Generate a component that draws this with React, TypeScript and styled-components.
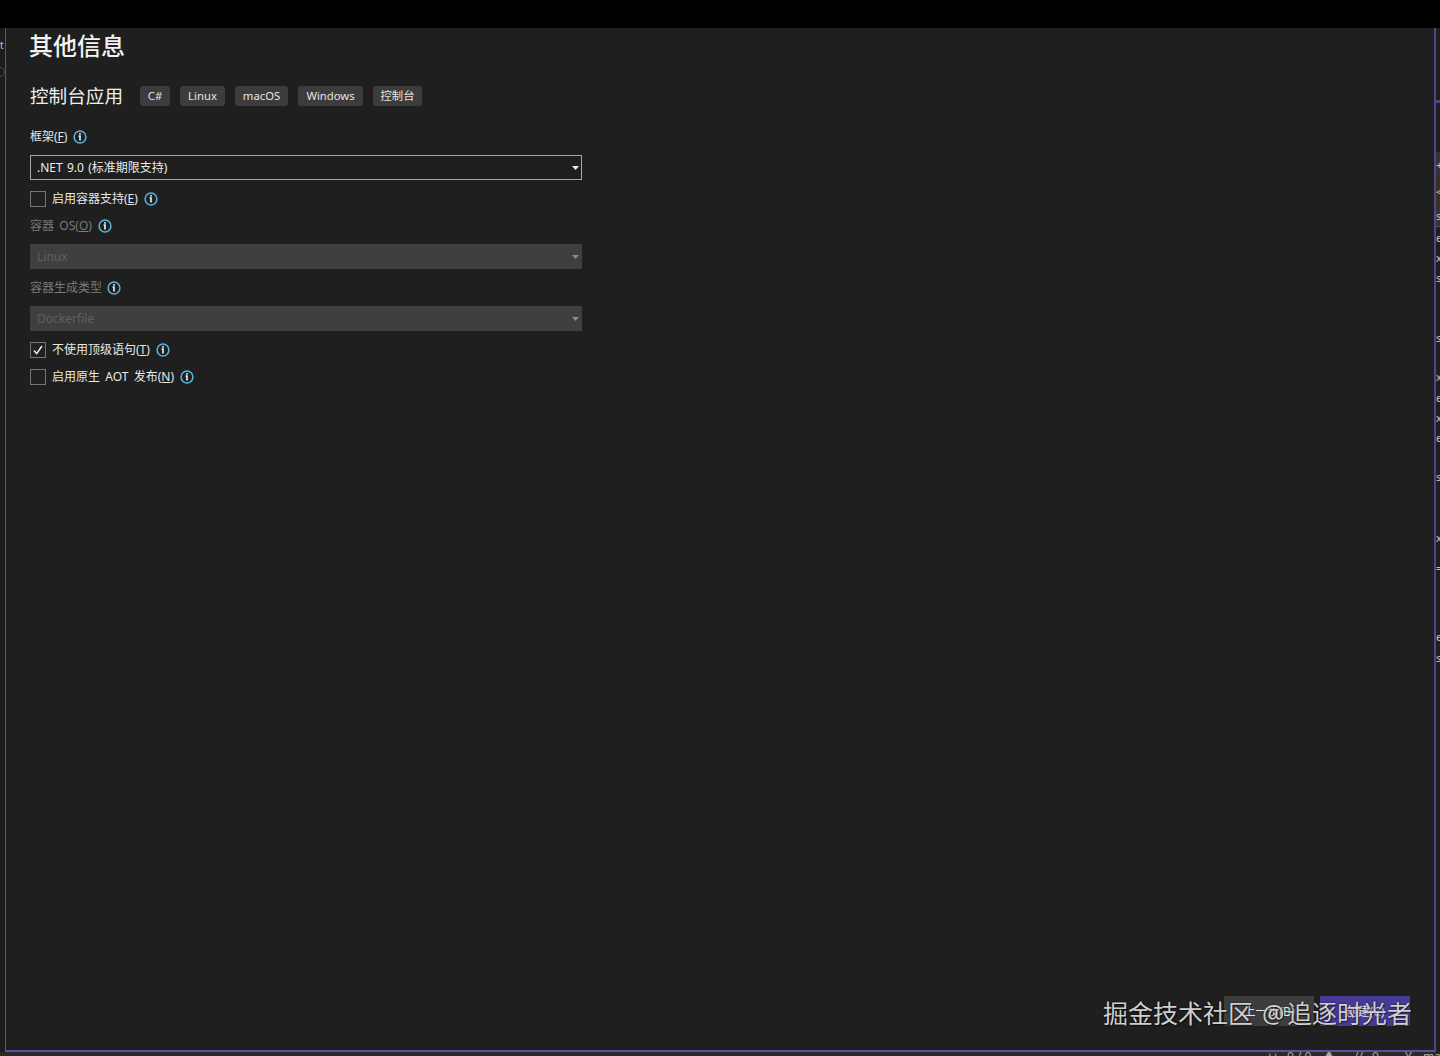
import React from "react";
import styled, { createGlobalStyle } from "styled-components";

const Global = createGlobalStyle`
  html, body { margin: 0; padding: 0; background: #1f1f1f; }
  body { font-family: "Noto Sans", "Noto Sans CJK SC", sans-serif; overflow: hidden; }
  #root { width: 1440px; height: 1056px; }
`;

const Shell = styled.div`
  width: 1440px; height: 1056px; display: flex; flex-direction: column; position: relative;
  overflow: hidden; background: #1f1f1f;
`;
const TopBar = styled.div`height: 28px; flex: none; background: #000;`;
const Middle = styled.div`flex: 1; display: flex; min-height: 0;`;
const LeftGutter = styled.div`
  width: 5px; flex: none; background: #1c1c1c; overflow: hidden; color: #c8c8c8;
  font-size: 10px; line-height: 12px; padding-top: 11px; box-sizing: border-box;
`;
const FaintRing = styled.div`
  width: 10px; height: 10px; margin: 16px 0 0 -5px; border-radius: 50%; border: 1px solid #4a4a4a; box-sizing: border-box;
`;
const Dialog = styled.main`
  flex: 1; display: flex; flex-direction: column; background: #1f1f1f; position: relative;
  border-left: 1px solid #5a4f9e; border-right: 2px solid #4d4689; border-bottom: 2px solid #5a50a0;
  padding-left: 24px; min-width: 0;
`;
const RightGutter = styled.div`
  width: 4px; flex: none; background: #1e1e1e; overflow: hidden; color: #c4c4c4;
  font-size: 11px; display: flex; flex-direction: column;
`;
const GutterRow = styled.div<{ $h: number; $bg?: string }>`
  height: ${p => p.$h}px; line-height: ${p => p.$h}px; flex: none;
  background: ${p => p.$bg || "transparent"};
`;
const BottomStrip = styled.div`
  height: 4px; flex: none; background: #2a2a2a; overflow: hidden; display: flex; align-items: flex-start;
  padding-left: 1268px; color: #a8a8a8; font-size: 12px; line-height: 10px; white-space: nowrap;
`;
const StatusItem = styled.span<{ $w: number }>`width: ${p => p.$w}px; flex: none;`;
const Title = styled.h1`
  margin: 0 0 14px -1px; height: 36px; font-size: 24px; line-height: 36px; font-weight: 500; color: #f2f2f2;
`;
const HeaderRow = styled.div`display: flex; align-items: center; height: 36px; margin-bottom: 9px;`;
const Subtitle = styled.h2`
  margin: 0; width: 110px; flex: none; font-size: 18.6px; line-height: 36px; font-weight: 400; color: #efefef; white-space: nowrap;
`;
const Tags = styled.div`display: flex; gap: 10px;`;
const Tag = styled.span<{ $w: number }>`
  width: ${p => p.$w}px; height: 20px; box-sizing: border-box; border-radius: 3px; background: #3c3c3c; text-align: center;
  color: #e4e4e4; font-size: 11.3px; line-height: 20px; white-space: nowrap;
`;
const Form = styled.div`display: flex; flex-direction: column; width: 552px; word-spacing: 2.2px;`;
const LabelRow = styled.div<{ $muted?: boolean }>`
  display: flex; align-items: center; gap: 6px; height: 27px; margin-bottom: 5px; font-size: 12px;
  color: ${p => p.$muted ? "#7a7a7a" : "#e6e6e6"}; white-space: nowrap;
`;
const LabelText = styled.span<{ $gap?: number }>`
  padding-bottom: 2px; margin-right: ${p => p.$gap ?? 0}px;
`;
const Key = styled.span`text-decoration: underline; text-underline-offset: 1px;`;
const Select = styled.div<{ $disabled?: boolean }>`
  height: 25px; box-sizing: border-box; display: flex; align-items: center; justify-content: space-between;
  padding: 0 6px; font-size: 12px; margin-bottom: 5px; word-spacing: 1.2px;
  border: 1px solid ${p => p.$disabled ? "#3f3f3f" : "#a8a8a8"};
  background: ${p => p.$disabled ? "#3f3f3f" : "#1f1f1f"};
  color: ${p => p.$disabled ? "#5f5f5f" : "#ececec"};
  svg { color: ${p => p.$disabled ? "#8a8a8a" : "#f0f0f0"}; margin-right: -4px; }
`;
const SelectText = styled.span<{ $raised?: boolean }>`padding-bottom: ${p => p.$raised ? 2 : 0}px;`;
const CheckRow = styled.div`
  display: flex; align-items: center; height: 27px; font-size: 12px; color: #e8e8e8; white-space: nowrap;
`;
const Box = styled.span`
  width: 16px; height: 16px; flex: none; box-sizing: border-box; border: 1px solid #757575; margin-right: 6px;
  display: flex; align-items: center; justify-content: center; background: #212121; color: #f2f2f2;
`;
const CheckText = styled.span`margin-right: 6px; padding-bottom: 2px;`;
const Actions = styled.div`
  position: absolute; right: 24px; bottom: 24px; display: flex; gap: 6px;
`;
const Action = styled.button<{ $primary?: boolean }>`
  width: 90px; height: 30px; border: 0; padding: 0; font: inherit; font-size: 12px; color: #e8e8e8;
  background: ${p => p.$primary ? "#463b96" : "#3d3d3d"};
`;
const Watermark = styled.div`
  position: absolute; right: 28px; top: 997px; font-size: 25px; line-height: 32px; color: #cfcfcf;
  text-shadow: 0 0 2px rgba(0,0,0,.7), 1px 1px 1px rgba(0,0,0,.5); white-space: nowrap;
`;
const AtMark = styled.span`margin: 0 2.5px;`;

const Info = () => (
  <svg width="14" height="14" viewBox="0 0 14 14" aria-hidden="true" style={{ flex: "none" }}>
    <circle cx="7" cy="7" r="5.9" fill="none" stroke="#58b4dc" strokeWidth="1.5" />
    <rect x="6.1" y="3.1" width="1.8" height="1.6" fill="#d6eef8" />
    <path d="M5.6 6.2H7V10.4" fill="none" stroke="#d6eef8" strokeWidth="1.7" />
  </svg>
);
const Caret = () => (
  <svg width="7" height="4" viewBox="0 0 7 4" aria-hidden="true"><path d="M0 0H7L3.5 4Z" fill="currentColor" /></svg>
);
const Check = () => (
  <svg width="12" height="12" viewBox="0 0 12 12" aria-hidden="true">
    <path d="M2 6.5L4.7 9.6L10 2" fill="none" stroke="currentColor" strokeWidth="1.5" />
  </svg>
);

const rows: { h: number; bg?: string; c?: string }[] = [
  { h: 72 }, { h: 3, bg: "#4d4689" }, { h: 49 },
  { h: 26, bg: "#333333", c: "+" }, { h: 27, bg: "#3a3020", c: "<" }, { h: 21, bg: "#333333", c: "s" }, { h: 1, bg: "#555555" }, { h: 1 },
  { h: 20, c: "e" }, { h: 20, c: "x" }, { h: 20, c: "s" }, { h: 40 }, { h: 20, c: "s" }, { h: 19 },
  { h: 20, c: "x" }, { h: 1 }, { h: 20, c: "e" }, { h: 20, c: "x" }, { h: 20, c: "e" }, { h: 19 },
  { h: 20, c: "s" }, { h: 41 }, { h: 20, c: "x" }, { h: 10 }, { h: 20, c: "=" }, { h: 49 }, { h: 20, c: "e" }, { h: 1 }, { h: 20, c: "s" },
];

export default function App() {
  return (
    <Shell>
      <Global />
      <TopBar />
      <Middle>
        <LeftGutter>t<FaintRing /></LeftGutter>
        <Dialog>
          <Title>其他信息</Title>
          <HeaderRow>
            <Subtitle>控制台应用</Subtitle>
            <Tags>
              <Tag $w={30}>C#</Tag>
              <Tag $w={45}>Linux</Tag>
              <Tag $w={53}>macOS</Tag>
              <Tag $w={65}>Windows</Tag>
              <Tag $w={49}>控制台</Tag>
            </Tags>
          </HeaderRow>
          <Form>
            <LabelRow>
              <LabelText>框架(<Key>F</Key>)</LabelText><Info />
            </LabelRow>
            <Select><SelectText $raised>.NET 9.0 (标准期限支持)</SelectText><Caret /></Select>
            <CheckRow><Box /><CheckText>启用容器支持(<Key>E</Key>)</CheckText><Info /></CheckRow>
            <LabelRow $muted><LabelText>容器 OS(<Key>O</Key>)</LabelText><Info /></LabelRow>
            <Select $disabled><SelectText>Linux</SelectText><Caret /></Select>
            <LabelRow $muted><LabelText $gap={-1}>容器生成类型</LabelText><Info /></LabelRow>
            <Select $disabled><SelectText>Dockerfile</SelectText><Caret /></Select>
            <CheckRow><Box><Check /></Box><CheckText>不使用顶级语句(<Key>T</Key>)</CheckText><Info /></CheckRow>
            <CheckRow><Box /><CheckText>启用原生 AOT 发布(<Key>N</Key>)</CheckText><Info /></CheckRow>
          </Form>
          <Actions>
            <Action>上一步(B)</Action>
            <Action $primary>创建(C)</Action>
          </Actions>
        </Dialog>
        <RightGutter>
          {rows.map((r, i) => <GutterRow key={i} $h={r.h} $bg={r.bg}>{r.c}</GutterRow>)}
        </RightGutter>
      </Middle>
      <BottomStrip>
        <StatusItem $w={19}>⊔</StatusItem>
        <StatusItem $w={36}>0 / 0</StatusItem>
        <StatusItem $w={31}>▲</StatusItem>
        <StatusItem $w={18}>//</StatusItem>
        <StatusItem $w={33}>0</StatusItem>
        <StatusItem $w={18}>Y</StatusItem>
        <StatusItem $w={17}>ma</StatusItem>
      </BottomStrip>
      <Watermark>掘金技术社区 <AtMark>@</AtMark>追逐时光者</Watermark>
    </Shell>
  );
}
